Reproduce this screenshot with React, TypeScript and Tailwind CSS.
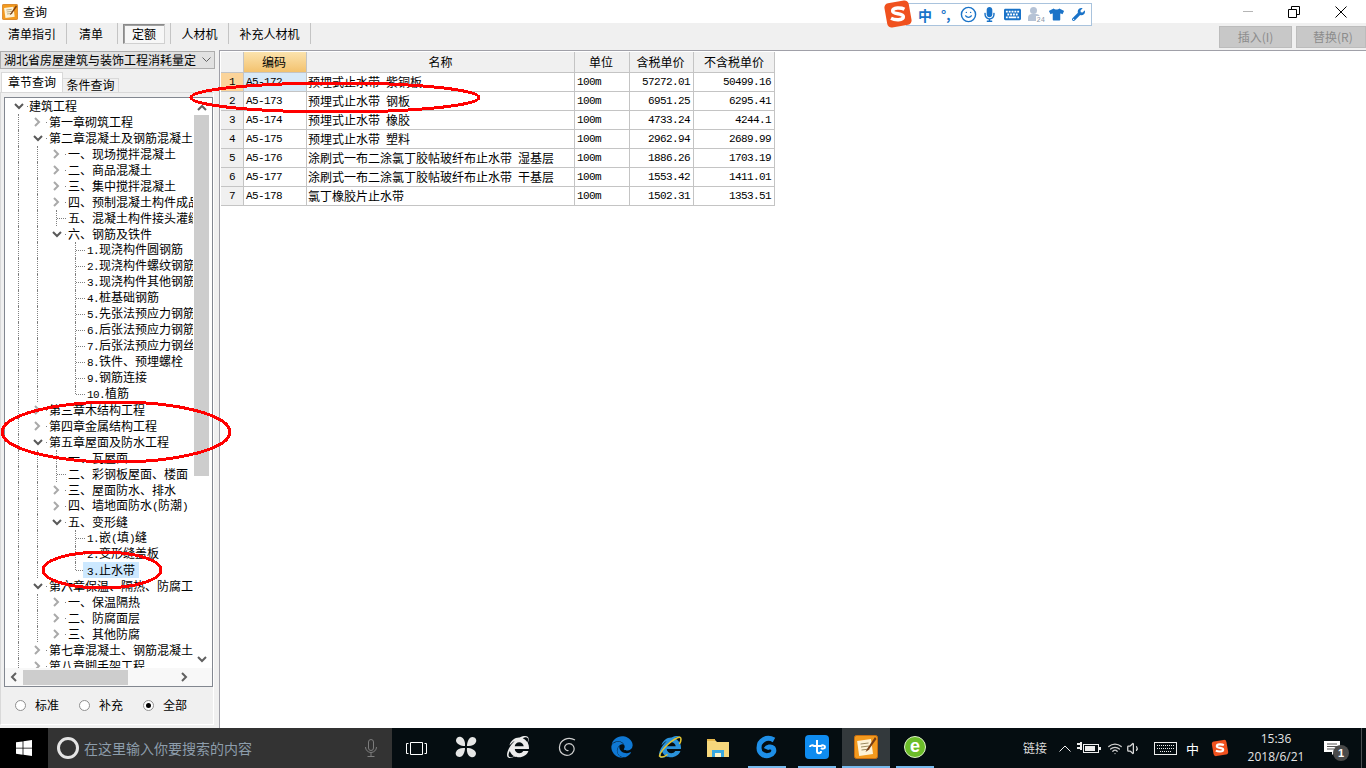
import React from 'react';
import { Smile, Wifi, Volume1 } from 'lucide-react';
import { FaEdge, FaInternetExplorer, FaKeyboard, FaMicrophone, FaTshirt, FaWrench } from 'react-icons/fa';

type TreeRow = {
  label: string;
  level: number;
  state?: 'open' | 'closed' | 'leaf' | 'last';
  selected?: boolean;
};

const treeRows: TreeRow[] = [
  { label: '建筑工程', level: 0, state: 'open' },
  { label: '第一章砌筑工程', level: 1, state: 'closed' },
  { label: '第二章混凝土及钢筋混凝土', level: 1, state: 'open' },
  { label: '一、现场搅拌混凝土', level: 2, state: 'closed' },
  { label: '二、商品混凝土', level: 2, state: 'closed' },
  { label: '三、集中搅拌混凝土', level: 2, state: 'closed' },
  { label: '四、预制混凝土构件成品', level: 2, state: 'closed' },
  { label: '五、混凝土构件接头灌缝', level: 2, state: 'leaf' },
  { label: '六、钢筋及铁件', level: 2, state: 'open' },
  { label: '1.现浇构件圆钢筋', level: 3, state: 'leaf' },
  { label: '2.现浇构件螺纹钢筋', level: 3, state: 'leaf' },
  { label: '3.现浇构件其他钢筋', level: 3, state: 'leaf' },
  { label: '4.桩基础钢筋', level: 3, state: 'leaf' },
  { label: '5.先张法预应力钢筋', level: 3, state: 'leaf' },
  { label: '6.后张法预应力钢筋', level: 3, state: 'leaf' },
  { label: '7.后张法预应力钢丝', level: 3, state: 'leaf' },
  { label: '8.铁件、预埋螺栓', level: 3, state: 'leaf' },
  { label: '9.钢筋连接', level: 3, state: 'leaf' },
  { label: '10.植筋', level: 3, state: 'last' },
  { label: '第三章木结构工程', level: 1, state: 'closed' },
  { label: '第四章金属结构工程', level: 1, state: 'closed' },
  { label: '第五章屋面及防水工程', level: 1, state: 'open' },
  { label: '一、瓦屋面', level: 2, state: 'leaf' },
  { label: '二、彩钢板屋面、楼面', level: 2, state: 'leaf' },
  { label: '三、屋面防水、排水', level: 2, state: 'closed' },
  { label: '四、墙地面防水(防潮)', level: 2, state: 'closed' },
  { label: '五、变形缝', level: 2, state: 'open' },
  { label: '1.嵌(填)缝', level: 3, state: 'leaf' },
  { label: '2.变形缝盖板', level: 3, state: 'leaf' },
  { label: '3.止水带', level: 3, state: 'last', selected: true },
  { label: '第六章保温、隔热、防腐工', level: 1, state: 'open' },
  { label: '一、保温隔热', level: 2, state: 'closed' },
  { label: '二、防腐面层', level: 2, state: 'closed' },
  { label: '三、其他防腐', level: 2, state: 'closed' },
  { label: '第七章混凝土、钢筋混凝土', level: 1, state: 'closed' },
  { label: '第八章脚手架工程', level: 1, state: 'closed' },
];

const quotaRows = [
  ['1', 'A5-172', '预埋式止水带 紫铜板', '100m', '57272.01', '50499.16'],
  ['2', 'A5-173', '预埋式止水带 钢板', '100m', '6951.25', '6295.41'],
  ['3', 'A5-174', '预埋式止水带 橡胶', '100m', '4733.24', '4244.1'],
  ['4', 'A5-175', '预埋式止水带 塑料', '100m', '2962.94', '2689.99'],
  ['5', 'A5-176', '涂刷式一布二涂氯丁胶帖玻纤布止水带 湿基层', '100m', '1886.26', '1703.19'],
  ['6', 'A5-177', '涂刷式一布二涂氯丁胶帖玻纤布止水带 干基层', '100m', '1553.42', '1411.01'],
  ['7', 'A5-178', '氯丁橡胶片止水带', '100m', '1502.31', '1353.51'],
];

// latin runs are 6px wide in the original font, so they get a squeezed mono face
const T = ({ s }: { s: string }) => (
  <>
    {s.split(/([\x20-\x7e]+)/).map((part, i) =>
      i % 2 === 1 ? (
        <span key={i} className="font-['Liberation_Mono',monospace] text-[11px] tracking-[-0.6px] whitespace-pre">
          {part}
        </span>
      ) : (
        <span key={i}>{part}</span>
      )
    )}
  </>
);

const Guide = () => (
  <div className="w-[19px] h-full shrink-0 flex justify-center">
    <div className="h-full border-l border-dotted border-[#808080]" />
  </div>
);

const Connector = ({ last }: { last?: boolean }) => (
  <div className="w-[19px] h-full shrink-0 flex">
    <div className={last ? 'w-[10px] h-[8px] border-r border-dotted border-[#808080]' : 'w-[10px] h-full border-r border-dotted border-[#808080]'} />
    <div className="w-[9px] h-full flex items-center">
      <div className="w-full border-t border-dotted border-[#808080]" />
    </div>
  </div>
);

const Chevron = ({ open }: { open: boolean }) => (
  <div className="w-[19px] h-full shrink-0 flex items-center justify-center relative">
    {open ? (
      <svg width="10" height="7" viewBox="0 0 10 7" fill="none" stroke="#595959" strokeWidth="2">
        <path d="M1 1l4 4 4-4" />
      </svg>
    ) : (
      <svg width="7" height="10" viewBox="0 0 7 10" fill="none" stroke="#a9a9a9" strokeWidth="2">
        <path d="M1 1l4 4-4 4" />
      </svg>
    )}
    <span className="absolute right-0 top-[8px] w-px h-px bg-[#808080]" />
  </div>
);

const TreeItem = ({ row }: { row: TreeRow }) => {
  const isParent = row.state === 'open' || row.state === 'closed';
  return (
    <div className="h-4 flex items-center pl-[4px] whitespace-nowrap text-[12px] leading-4 text-black">
      {row.level >= 1 && <Guide />}
      {row.level >= 2 && <Guide />}
      {row.level === 3 && <div className="w-[19px] shrink-0" />}
      {isParent ? <Chevron open={row.state === 'open'} /> : <Connector last={row.state === 'last'} />}
      <span className={row.selected ? 'ml-[-2px] pl-[4px] pr-[4px] bg-[#cce8ff] h-4' : row.level === 0 ? 'ml-px' : 'ml-[2px]'}>
        <T s={row.label} />
      </span>
    </div>
  );
};

const Radio = ({ label, checked }: { label: string; checked?: boolean }) => (
  <div className="flex items-center gap-[9px] text-[12px] text-black">
    <span className="w-[11px] h-[11px] rounded-full border border-[#8f8f8f] bg-white flex items-center justify-center">
      {checked && <span className="w-[5px] h-[5px] rounded-full bg-black" />}
    </span>
    {label}
  </div>
);

const ToolTab = ({ label, width, active }: { label: string; width: string; active?: boolean }) => (
  <div className={`${width} h-[21px] border-r border-[#c4c4c4] flex items-center justify-center text-[12px] text-black`}>
    {active ? (
      <span className="w-[42px] h-[20px] flex items-center justify-center border border-[#8a8a8a] border-r-[#d0d0d0] border-b-[#d0d0d0] shadow-[inset_1px_1px_0_#a0a0a0] bg-[#f7f7f7]">
        {label}
      </span>
    ) : (
      label
    )}
  </div>
);

const SogouLogo = ({ size }: { size: number }) => (
  <svg width={size} height={size} viewBox="0 0 28 28">
    <rect x="2.5" y="2.5" width="23" height="23" rx="4" fill="#f0511e" transform="rotate(-10 14 14)" />
    <path d="M20 9.5c-3-1.6-11-2-11 1.7 0 3.6 10 1.6 10 5.4 0 3.6-8 3.2-11.500 1.400" fill="none" stroke="#fff" strokeWidth="3.200" />
  </svg>
);

const NoteIcon = ({ size }: { size: number }) => (
  <svg width={size} height={size} viewBox="0 0 24 24">
    <rect x="0.500" y="0.500" width="23" height="23" rx="2" fill="#f39a1e" stroke="#c96e10" />
    <rect x="4" y="5" width="14" height="15" fill="#fdf3d8" transform="rotate(-8 11 12)" />
    <path d="M6.500 9l8-1M7 12l8-1M7.500 15l8-1" stroke="#9a8a60" />
    <path d="M21 2l-8 12-1.500 3 3-2 8-11z" fill="#7a3d12" />
  </svg>
);

const TaskCell = ({ children, ml, running, selected }: { children: React.ReactNode; ml: string; running?: boolean; selected?: boolean }) => (
  <div className={`${ml} w-12 h-full flex flex-col shrink-0 ${selected ? 'bg-[#33393c]' : ''}`}>
    <div className="flex-1 flex items-center justify-center">{children}</div>
    {running ? <div className={selected ? 'h-[2px] bg-[#76b9ed]' : 'h-[2px] mx-[5px] bg-[#76b9ed]'} /> : <div className="h-[2px]" />}
  </div>
);

const monoCell = "font-['Liberation_Mono',monospace] text-[11px] tracking-[-0.6px]";

export default function App() {
  return (
    <div className="relative w-[1366px] h-[768px] overflow-hidden flex flex-col bg-[#f0f0f0] font-['Noto_Sans_CJK_SC','Liberation_Sans',sans-serif]">
      {/* title bar */}
      <div className="h-[23px] bg-white flex items-center shrink-0">
        <div className="ml-[2px] mr-[5px]">
          <NoteIcon size={16} />
        </div>
        <span className="text-[12px] text-black">查询</span>
        <div className="ml-[838px] h-[23px] w-[207px] flex items-start">
          <div className="w-[207px] h-[23px] mt-[3px] ml-0 flex items-center relative">
            <div className="absolute left-[-2px] top-[-4px]">
              <SogouLogo size={30} />
            </div>
            <div className="ml-[21px] w-[186px] h-[23px] bg-white border border-[#a9c3dd] flex items-center text-[#1a73c8]">
              <span className="ml-[11px] w-[20px] text-[14px] font-bold leading-none">中</span>
              <span className="ml-[3px] w-[16px] text-[13px] font-bold leading-none">°,</span>
              <Smile size={17} strokeWidth={2} className="ml-[3px]" />
              <FaMicrophone size={15} className="ml-[5px]" />
              <FaKeyboard size={17} className="ml-[7px]" />
              <span className="ml-[7px] w-[16px] h-[16px] relative">
                <span className="absolute left-[2px] top-0 w-[7px] h-[7px] rounded-full bg-[#b6c3d6]" />
                <span className="absolute left-0 top-[7px] w-[12px] h-[7px] rounded-t-[4px] bg-[#b6c3d6]" />
                <span className="absolute right-[-2px] bottom-[-1px] px-px bg-white text-[7px] leading-[8px] text-[#8a97a8] font-['Liberation_Mono',monospace]">24</span>
              </span>
              <FaTshirt size={15} className="ml-[5px]" />
              <FaWrench size={13} className="ml-[8px]" />
            </div>
          </div>
        </div>
        <div className="ml-auto flex items-center">
          <div className="w-[10px] h-px bg-[#b5b5b5]" />
          <svg className="ml-[35px]" width="12" height="12" viewBox="0 0 12 12" fill="none" stroke="#000">
            <path d="M0.500 3.500h8v8h-8zM3.500 3.500v-3h8v8h-3" />
          </svg>
          <svg className="ml-[35px] mr-[19px]" width="12" height="12" viewBox="0 0 12 12" fill="none" stroke="#000">
            <path d="M0.500 0.500l11 11M11.500 0.500l-11 11" />
          </svg>
        </div>
      </div>

      {/* toolbar */}
      <div className="h-[27px] shrink-0 flex items-start justify-between">
        <div className="flex items-center">
          <ToolTab label="清单指引" width="w-[67px] pr-[2px]" />
          <ToolTab label="清单" width="w-[51px] pr-[2px]" />
          <ToolTab label="定额" width="w-[53px]" active />
          <ToolTab label="人材机" width="w-[58px]" />
          <ToolTab label="补充人材机" width="w-[82px]" />
        </div>
        <div className="flex mt-[3px] gap-[4px]">
          <button className="w-[73px] h-[22px] bg-[#c8c8c8] border border-[#bcbcbc] text-[12px] text-[#8c8c8c]">插入(I)</button>
          <button className="w-[70px] h-[22px] bg-[#c8c8c8] border border-[#bcbcbc] text-[12px] text-[#8c8c8c] text-left pl-[16px]">替换(R)</button>
        </div>
      </div>

      {/* main area */}
      <div className="h-[678px] shrink-0 flex">
        <div className="w-[215px] shrink-0 flex flex-col pt-px">
          <div className="h-[18px] bg-[#e1e1e1] border border-[#adadad] flex items-center text-[12px] text-black pl-[3px] whitespace-nowrap">
            <span className="w-[192px]">湖北省房屋建筑与装饰工程消耗量定</span>
            <svg className="ml-[6px]" width="9" height="6" viewBox="0 0 9 6" fill="none" stroke="#606060">
              <path d="M0.500 0.500l4 4 4-4" />
            </svg>
          </div>
          <div className="flex items-end h-[23px] pl-px shrink-0">
            <div className="w-[62px] h-[20px] pb-px bg-white border-t border-l border-r border-[#d9d9d9] flex items-center justify-center text-[12px] text-black">章节查询</div>
            <div className="w-[56px] h-[14px] pb-[2px] bg-[#f0f0f0] border-t border-r border-[#d9d9d9] flex items-center justify-center text-[12px] text-black">条件查询</div>
          </div>
          <div className="flex-1 mb-[3px] mr-px border border-[#d9d9d9] border-r-white border-b-white pt-[4px] pl-[3px] pr-px flex flex-col">
            <div className="w-[209px] h-[590px] shrink-0 bg-white border border-[#828790] flex flex-col">
              <div className="h-[570px] flex">
                <div className="w-[188px] overflow-hidden">
                  {treeRows.map((row) => (
                    <TreeItem key={row.label} row={row} />
                  ))}
                </div>
                <div className="w-[15px] ml-px flex flex-col items-center bg-white">
                  <svg className="mt-[6px]" width="10" height="7" viewBox="0 0 10 7" fill="none" stroke="#606060" strokeWidth="2">
                    <path d="M1 6l4-4 4 4" />
                  </svg>
                  <div className="w-[15px] h-[361px] mt-[4px] bg-[#cdcdcd]" />
                  <svg className="mt-[180px]" width="10" height="7" viewBox="0 0 10 7" fill="none" stroke="#606060" strokeWidth="2">
                    <path d="M1 1l4 4 4-4" />
                  </svg>
                </div>
              </div>
              <div className="flex-1 flex items-center bg-[#f8f8f8] pl-[5px]">
                <svg width="7" height="10" viewBox="0 0 7 10" fill="none" stroke="#606060" strokeWidth="2">
                  <path d="M6 1l-4 4 4 4" />
                </svg>
                <div className="ml-[6px] w-[105px] h-[15px] bg-[#cdcdcd]" />
                <svg className="ml-[53px]" width="7" height="10" viewBox="0 0 7 10" fill="none" stroke="#606060" strokeWidth="2">
                  <path d="M1 1l4 4-4 4" />
                </svg>
              </div>
            </div>
            <div className="flex-1 flex items-center pl-[11px] gap-[20px] pb-px">
              <Radio label="标准" />
              <Radio label="补充" />
              <Radio label="全部" checked />
            </div>
          </div>
        </div>

        <div className="w-[4px] shrink-0" />

        {/* quota table */}
        <div className="flex-1 bg-white border-t border-l border-[#a0a0a8] pt-px pl-px">
          <div className="w-[554px] text-[12px] text-black">
            <div className="h-[21px] grid grid-cols-[23px_63px_268px_55px_64px_81px] border-b border-[#c4c4c4]">
              <div className="bg-[#f0f0f0] border-r border-[#c4c4c4]" />
              <div className="bg-gradient-to-b from-[#fbe3ad] to-[#f3c26e] border-r border-[#c4c4c4] flex items-center justify-center pr-[2px]">编码</div>
              <div className="bg-[#f0f0f0] border-r border-[#c4c4c4] flex items-center justify-center">名称</div>
              <div className="bg-[#f0f0f0] border-r border-[#c4c4c4] flex items-center justify-center pr-[2px]">单位</div>
              <div className="bg-[#f0f0f0] border-r border-[#c4c4c4] flex items-center justify-center pr-[2px]">含税单价</div>
              <div className="bg-[#f0f0f0] border-r border-[#c4c4c4] flex items-center justify-center">不含税单价</div>
            </div>
            {quotaRows.map((row, i) => (
              <div key={row[0]} className="h-[19px] grid grid-cols-[23px_63px_268px_55px_64px_81px] border-b border-[#c4c4c4]">
                <div className={`${i === 0 ? 'bg-[#fbd49a]' : 'bg-[#f0f0f0]'} border-r border-[#c4c4c4] flex items-center justify-center ${monoCell}`}>
                  {row[0]}
                </div>
                <div className={`${i === 0 ? 'bg-[#d7e9f8]' : ''} border-r border-[#c4c4c4] flex items-center pl-[2px] ${monoCell}`}>
                  {row[1]}
                </div>
                <div className="border-r border-[#c4c4c4] flex items-center pl-px whitespace-pre">
                  <T s={row[2]} />
                </div>
                <div className={`border-r border-[#c4c4c4] flex items-center pl-[2px] ${monoCell}`}>{row[3]}</div>
                <div className={`border-r border-[#c4c4c4] flex items-center justify-end pr-[3px] ${monoCell}`}>{row[4]}</div>
                <div className={`border-r border-[#c4c4c4] flex items-center justify-end pr-[3px] ${monoCell}`}>{row[5]}</div>
              </div>
            ))}
          </div>
        </div>
      </div>

      {/* taskbar */}
      <div className="h-10 shrink-0 bg-[#050d11] flex items-stretch">
        <div className="w-12 bg-black flex items-center justify-center">
          <svg width="16" height="16" viewBox="0 0 16 16" fill="#fff">
            <path d="M0 2.300l6.600-.9v6.300H0zM7.400 1.300L16 0v7.700H7.400zM0 8.400h6.600v6.300L0 13.800zM7.400 8.400H16V16l-8.600-1.200z" />
          </svg>
        </div>
        <div className="w-[344px] bg-[#333333] flex items-center">
          <span className="ml-[9px] w-[22px] h-[22px] rounded-full border-[3px] border-[#e4e4e4]" />
          <span className="ml-[5px] text-[14px] text-[#8d9dab]">在这里输入你要搜索的内容</span>
          <svg className="ml-[113px]" width="12" height="18" viewBox="0 0 12 18" fill="none" stroke="#7d7d7d">
            <rect x="3.500" y="0.500" width="5" height="11" rx="2.500" />
            <path d="M0.500 8a5.500 5.500 0 0 0 11 0M6 13.500v3.500M2.500 17.500h7" />
          </svg>
        </div>
        <div className="w-12 flex items-center justify-center">
          <svg width="21" height="13" viewBox="0 0 21 13" fill="none" stroke="#fff">
            <path d="M4.500 0.500h12v12h-12zM2.500 1.500h-2v10h2M18.500 1.500h2v10h-2" />
          </svg>
        </div>
        <TaskCell ml="ml-[2px]">
          <svg width="22" height="22" viewBox="0 0 22 22" fill="#e6e6e6">
            <path d="M10 10C6 10 1 8 1 4.500 1 1.500 4 0 6 1c3 1 4.500 5 4 9zM12 10c0-4 2-9 5.500-9C20.500 1 22 4 21 6c-1 3-5 4.500-9 4zM12 12c4 0 9 2 9 5.500 0 3-3 4.500-5 3.500-3-1-4.500-5-4-9zM10 12c0 4-2 9-5.500 9C1.500 21 0 18 1 16c1-3 5-4.500 9-4z" />
          </svg>
        </TaskCell>
        <TaskCell ml="ml-1">
          <FaInternetExplorer size={22} color="#ececec" />
        </TaskCell>
        <TaskCell ml="ml-[2px]">
          <svg width="20" height="20" viewBox="0 0 20 20" fill="none" stroke="#d0d0d0" strokeWidth="1.200">
            <path d="M17 3C10-1 2 3 1.500 10c-.5 6 5 9.500 10 8 4-1.500 6-6 3.500-9.500C13 6 8.500 6 7 9c-1 2.500 1 5 3.500 4.500" />
          </svg>
        </TaskCell>
        <TaskCell ml="ml-[6px]">
          <FaEdge size={22} color="#0f78d4" />
        </TaskCell>
        <TaskCell ml="ml-0">
          <span className="relative w-6 h-6 flex items-center justify-center">
            <FaInternetExplorer size={22} color="#2a93dc" />
            <svg className="absolute inset-0" width="24" height="24" viewBox="0 0 24 24" fill="none" stroke="#e8c52e" strokeWidth="1.500">
              <path d="M22 2C16 3 3 14 1.500 21c2 2 6 0 8-1.500M22 2c1.500 1 1 4-.5 7" />
            </svg>
          </span>
        </TaskCell>
        <TaskCell ml="ml-0">
          <svg width="22" height="20" viewBox="0 0 22 20">
            <path d="M0 3h8l2 2h12v15H0z" fill="#f6d77c" />
            <path d="M0 2h8v2H0z" fill="#e6b84c" />
            <path d="M5 13h12v7h-3v-4H8v4H5z" fill="#3aa8e0" />
            <path d="M8 16h6v4H8z" fill="#fff3c8" />
          </svg>
        </TaskCell>
        <TaskCell ml="ml-px" running>
          <svg width="24" height="24" viewBox="0 0 24 24" fill="none" stroke="#1e8fe8" strokeWidth="5">
            <path d="M19 5C12 1 4 5 4 13c0 6 6 9 11 7 3-1 5-4 3-7-2-2-6-1-7 1" />
          </svg>
        </TaskCell>
        <TaskCell ml="ml-[2px]" running>
          <svg width="24" height="24" viewBox="0 0 24 24">
            <rect width="24" height="24" rx="4" fill="#0f8cf0" />
            <path d="M12 5v11c0 3 4 3 4 0M5 12c0-2 3-2 4-1h7c1-1 4-1 4 1s-3 2-4 1" fill="none" stroke="#fff" strokeWidth="2" />
          </svg>
        </TaskCell>
        <TaskCell ml="ml-px" running selected>
          <NoteIcon size={24} />
        </TaskCell>
        <TaskCell ml="ml-px" running>
          <span className="w-[22px] h-[22px] rounded-full bg-[#6cbd2a] border border-[#dff2c8] flex items-center justify-center text-white font-['Liberation_Sans',sans-serif] text-[18px] font-bold leading-none pb-[2px]">e</span>
        </TaskCell>

        {/* tray */}
        <div className="ml-auto flex items-center text-[#dcdcdc]">
          <span className="w-10 text-center text-[12px]">链接</span>
          <svg className="mx-[4px]" width="12" height="7" viewBox="0 0 12 7" fill="none" stroke="#eee">
            <path d="M0.500 6.500l5.500-5.500 5.500 5.500" />
          </svg>
          <svg className="mx-[2px]" width="24" height="12" viewBox="0 0 24 12" fill="#eee">
            <path d="M0 1h3v2H0zM0 5h3v2H0z" />
            <path d="M3 0h2v8H3z" />
            <rect x="6.500" y="2.500" width="15" height="8" fill="none" stroke="#eee" />
            <path d="M8 4h10v5H8zM22 5h2v3h-2z" />
          </svg>
          <Wifi size={15} className="ml-[2px] w-5 text-[#cfcfcf]" />
          <Volume1 size={15} className="w-[18px] text-[#dcdcdc]" />
          <svg className="ml-[11px] mr-[9px]" width="23" height="13" viewBox="0 0 23 13" fill="none" stroke="#eee">
            <rect x="0.500" y="0.500" width="22" height="12" />
            <path d="M3 3.500h17M3 6.500h17M6 9.500h11" strokeDasharray="1 1" />
          </svg>
          <span className="w-[12px] text-[13px] text-white leading-none">中</span>
          <span className="ml-[13px] w-[33px]">
            <SogouLogo size={18} />
          </span>
          <div className="w-16 flex flex-col items-center font-['Open_Sans',sans-serif] text-[12px] leading-[18px] text-[#e4e4e4]">
            <span>15:36</span>
            <span>2018/6/21</span>
          </div>
          <div className="w-12 flex items-center justify-center relative">
            <svg width="16" height="15" viewBox="0 0 16 15">
              <path d="M0 0h16v11h-5l-3 3v-3H0z" fill="#fff" />
              <path d="M3 3h10M3 5.500h10M3 8h7" stroke="#555" />
            </svg>
            <span className="absolute left-[25px] top-[4px] w-4 h-4 rounded-full bg-[#4a4a4a] text-white text-[11px] leading-4 text-center font-bold font-['Liberation_Sans',sans-serif]">1</span>
          </div>
          <div className="w-[5px]" />
          <div className="w-px h-10 bg-[#4a4f52]" />
          <div className="w-[4px]" />
        </div>
      </div>

      {/* red hand-drawn marks over the page */}
      <svg className="absolute inset-0 pointer-events-none" width="1366" height="768" fill="none" stroke="#ff0000" strokeWidth="3" shapeRendering="crispEdges">
        <ellipse cx="335" cy="97.500" rx="144" ry="14.500" />
        <ellipse cx="116" cy="432" rx="114" ry="30" />
        <ellipse cx="102" cy="570" rx="59" ry="18" />
      </svg>
    </div>
  );
}
